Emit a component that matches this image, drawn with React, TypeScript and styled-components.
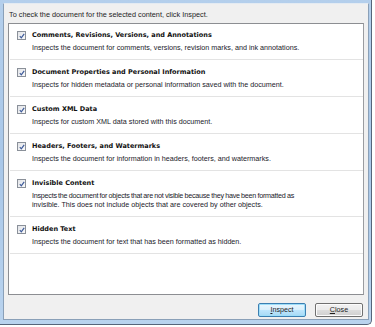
import React from 'react'
import styled, { createGlobalStyle } from 'styled-components'

const GlobalStyle = createGlobalStyle`
  html, body {
    margin: 0;
    padding: 0;
    background: #ffffff;
  }
  body {
    font-family: 'Liberation Sans', Arial, sans-serif;
  }
`

const Frame = styled.div`
  width: 372px;
  height: 325px;
  box-sizing: border-box;
  padding: 3px 2px 4px 3px;
  background: linear-gradient(180deg, #b4cfec 0%, #a9c7e8 50%, #b9d3ee 100%);
  border-right: 1px solid #56657a;
  border-bottom: 1px solid #56657a;
  border-bottom-right-radius: 5px;
  display: flex;
`

const Dialog = styled.div`
  flex: 1;
  display: flex;
  flex-direction: column;
  background: #f0f0f0;
  border-left: 1px solid #8aa0b8;
  border-top: 1px solid #e4ebf2;
  border-right: 1px solid #8aa0b8;
  border-bottom: 1px solid #8aa0b8;
  padding: 0 4px 0 4px;
`

const Intro = styled.div`
  height: 19px;
  line-height: 21px;
  padding-left: 1px;
  font-size: 7.3px;
  color: #1e1e1e;
`

const Panel = styled.div`
  height: 270px;
  background: #ffffff;
  border: 1px solid #8c8e92;
  border-right-color: #9a9ca0;
  display: flex;
  flex-direction: column;
`

const Row = styled.div<{ $first?: boolean }>`
  display: flex;
  gap: 6px;
  padding: ${p => (p.$first ? '6px' : '7px')} 8px 7px 7px;
  margin-left: 1px;
  border-bottom: 1px solid #e3e3e3;
`

const Check = styled.div`
  flex: none;
  width: 7px;
  height: 7px;
  margin-top: 1px;
  border: 1px solid #8a9099;
  background: linear-gradient(135deg, #e2e4e8 0%, #fafafa 100%);
  display: flex;
  align-items: center;
  justify-content: center;
  svg {
    display: block;
  }
`

const Texts = styled.div`
  display: flex;
  flex-direction: column;
`

const Title = styled.div`
  font-family: 'DejaVu Sans', Verdana, sans-serif;
  font-weight: bold;
  font-size: 6.5px;
  line-height: 10px;
  color: #101010;
`

const Desc = styled.div`
  margin-top: 3px;
  font-size: 7.2px;
  line-height: 9px;
  color: #1a1a2a;
`

const DescLine = styled.div<{ $tight?: boolean }>`
  letter-spacing: ${p => (p.$tight ? '-0.25px' : 'normal')};
  word-spacing: ${p => (p.$tight ? '-0.4px' : 'normal')};
`

const Footer = styled.div`
  display: flex;
  justify-content: flex-end;
  gap: 9px;
  padding: 8px 1px 0 0;
`

const Button = styled.button<{ $default?: boolean }>`
  width: 48px;
  height: 14px;
  padding: 0;
  border-radius: 2px;
  border: 1px solid ${p => (p.$default ? '#3c7fb1' : '#707070')};
  background: ${p =>
    p.$default
      ? 'linear-gradient(180deg, #eaf6fd 0%, #d9f0fc 50%, #bee6fd 51%, #a7d9f5 100%)'
      : 'linear-gradient(180deg, #f2f2f2 0%, #ebebeb 50%, #dddddd 51%, #cfcfcf 100%)'};
  box-shadow: inset 0 0 0 1px ${p => (p.$default ? '#9edef9' : '#fcfcfc')};
  font-family: 'Liberation Sans', Arial, sans-serif;
  font-size: 7.2px;
  color: #1e1e1e;
  line-height: 12px;
  u {
    text-decoration: underline;
  }
`

const items = [
  {
    title: 'Comments, Revisions, Versions, and Annotations',
    desc: ['Inspects the document for comments, versions, revision marks, and ink annotations.'],
  },
  {
    title: 'Document Properties and Personal Information',
    desc: ['Inspects for hidden metadata or personal information saved with the document.'],
  },
  {
    title: 'Custom XML Data',
    desc: ['Inspects for custom XML data stored with this document.'],
  },
  {
    title: 'Headers, Footers, and Watermarks',
    desc: ['Inspects the document for information in headers, footers, and watermarks.'],
  },
  {
    title: 'Invisible Content',
    tight: true,
    desc: [
      'Inspects the document for objects that are not visible because they have been formatted as',
      'invisible. This does not include objects that are covered by other objects.',
    ],
  },
  {
    title: 'Hidden Text',
    desc: ['Inspects the document for text that has been formatted as hidden.'],
  },
]

const CheckMark = () => (
  <svg width="6" height="6" viewBox="0 0 6 6">
    <path d="M0.8 3.2 L2.3 4.8 L5.2 0.8" fill="none" stroke="#3d5a9a" strokeWidth="1.2" />
  </svg>
)

const App = () => {
  return (
    <>
      <GlobalStyle />
      <Frame>
        <Dialog>
          <Intro>To check the document for the selected content, click Inspect.</Intro>
          <Panel>
            {items.map((item, i) => (
              <Row key={item.title} $first={i === 0}>
                <Check>
                  <CheckMark />
                </Check>
                <Texts>
                  <Title>{item.title}</Title>
                  <Desc>
                    {item.desc.map((line, j) => (
                      <DescLine key={line} $tight={item.tight && j === 0}>
                        {line}
                      </DescLine>
                    ))}
                  </Desc>
                </Texts>
              </Row>
            ))}
          </Panel>
          <Footer>
            <Button $default>
              <u>I</u>nspect
            </Button>
            <Button>
              <u>C</u>lose
            </Button>
          </Footer>
        </Dialog>
      </Frame>
    </>
  )
}

export default App
